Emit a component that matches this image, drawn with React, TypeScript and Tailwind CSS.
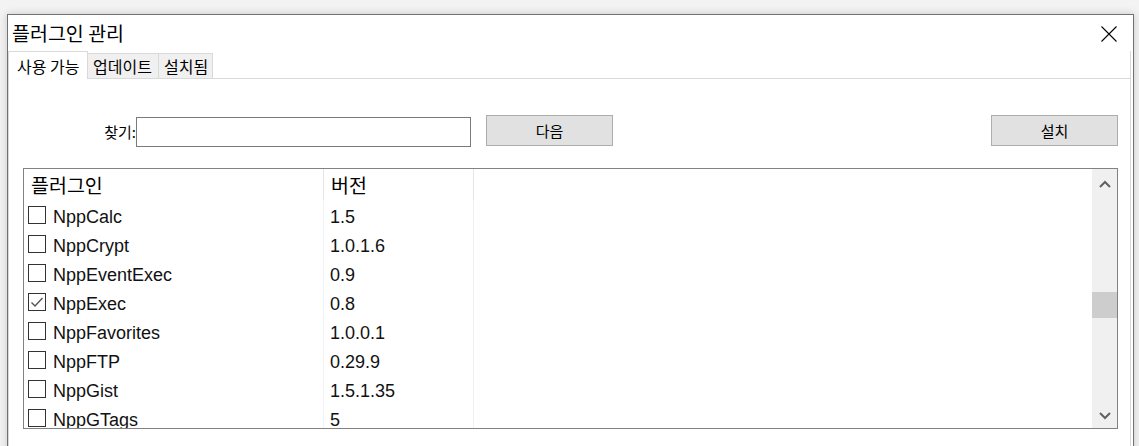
import React from "react";

const rows: { name: string; ver: string; checked?: boolean }[] = [
  { name: "NppCalc", ver: "1.5" },
  { name: "NppCrypt", ver: "1.0.1.6" },
  { name: "NppEventExec", ver: "0.9" },
  { name: "NppExec", ver: "0.8", checked: true },
  { name: "NppFavorites", ver: "1.0.0.1" },
  { name: "NppFTP", ver: "0.29.9" },
  { name: "NppGist", ver: "1.5.1.35" },
  { name: "NppGTags", ver: "5" },
];

const KR = "font-['Noto_Sans_CJK_KR','Noto_Sans',sans-serif]";
const LAT = "font-['Liberation_Sans','Noto_Sans_CJK_KR',sans-serif]";

export default function App() {
  return (
    <div className="w-[1139px] h-[446px] overflow-hidden bg-[#f3f3f3] pt-[14px] pl-[7px]">
      <div className="w-[1127px] h-[460px] border border-[#717171] bg-white shadow-[0_0_8px_rgba(0,0,0,0.18)] text-black">
        {/* Title bar */}
        <div className="h-[36px] flex items-center justify-between pl-[4px] pr-[16px]">
          <span className={`${KR} text-[19.5px] leading-none`}>플러그인 관리</span>
          <svg width="16" height="16" viewBox="0 0 16 16" className="mt-[1px]">
            <path d="M0.5 0.5 L15.5 15.5 M15.5 0.5 L0.5 15.5" stroke="#000" strokeWidth="1.1" fill="none" />
          </svg>
        </div>
        {/* Tabs */}
        <div className="h-[28px] flex items-end w-[1123px]">
          <div className={`${KR} h-[28px] w-[80px] border-l border-t border-r border-[#d9d9d9] bg-white flex items-center pl-[8px] text-[16px] leading-none`}>
            사용 가능
          </div>
          <div className={`${KR} h-[26px] w-[71px] border-t border-r border-b border-[#d9d9d9] bg-[#f0f0f0] flex items-center pl-[5px] text-[16px] leading-none`}>
            업데이트
          </div>
          <div className={`${KR} h-[26px] w-[54px] border-t border-r border-b border-[#d9d9d9] bg-[#f0f0f0] flex items-center pl-[5px] text-[16px] leading-none`}>
            설치됨
          </div>
          <div className="flex-1 h-[1px] bg-[#d9d9d9]" />
          <div className="h-[28px] w-[1px] bg-[#d9d9d9]" />
        </div>
        {/* Pane */}
        <div className="w-[1123px] h-[400px] border-l border-r border-[#d9d9d9] pt-[36px]">
          <div className="flex items-start h-[32px] pr-[12px]">
            <div className={`${KR} w-[127px] h-[32px] flex items-center justify-end text-[15px] leading-none pt-[1px]`}>
              찾기:
            </div>
            <div className="w-[335px] h-[30px] mt-[2px] border border-[#7a7a7a] bg-white" />
            <button className={`${KR} ml-[15px] w-[127px] h-[31px] border border-[#adadad] bg-[#e1e1e1] text-[15px] leading-none flex items-center justify-center`}>
              다음
            </button>
            <div className="flex-1" />
            <button className={`${KR} w-[127px] h-[31px] border border-[#adadad] bg-[#e1e1e1] text-[15px] leading-none flex items-center justify-center`}>
              설치
            </button>
          </div>
          {/* List */}
          <div className="ml-[14px] mt-[21px] w-[1095px] h-[261px] border border-[#828282] flex overflow-hidden bg-white">
            <div className="flex-1 flex flex-col overflow-hidden">
              <div className="h-[31px] shrink-0 flex">
                <div className={`${KR} w-[300px] border-r border-[#e5e5e5] flex items-center pl-[7px] text-[19.5px] leading-none`}>
                  플러그인
                </div>
                <div className={`${KR} w-[150px] border-r border-[#e5e5e5] flex items-center pl-[7px] text-[19.5px] leading-none`}>
                  버전
                </div>
                <div className="flex-1" />
              </div>
              {rows.map((r) => (
                <div key={r.name} className="h-[29px] shrink-0 flex">
                  <div className="w-[300px] border-r border-[#eef1f5] flex items-center pl-[4px]">
                    <div className="w-[18px] h-[18px] border border-[#333333] bg-white flex items-center justify-center shrink-0">
                      {r.checked && (
                        <svg width="16" height="16" viewBox="0 0 16 16">
                          <path d="M2.5 8.5 L6 12 L13.5 4" stroke="#555" strokeWidth="1.4" fill="none" />
                        </svg>
                      )}
                    </div>
                    <span className={`${LAT} ml-[7px] mt-[4px] text-[18px] leading-none text-[#111]`}>{r.name}</span>
                  </div>
                  <div className="w-[150px] border-r border-[#eef1f5] flex items-center pl-[6px]">
                    <span className={`${LAT} mt-[4px] text-[18px] leading-none text-[#111]`}>{r.ver}</span>
                  </div>
                  <div className="flex-1" />
                </div>
              ))}
            </div>
            {/* Scrollbar */}
            <div className="w-[25px] h-full bg-[#f0f0f0] flex flex-col">
              <div className="h-[25px] flex items-center justify-center pt-[4px]">
                <svg width="12" height="8" viewBox="0 0 12 8">
                  <path d="M1 7 L6 2 L11 7" stroke="#606060" strokeWidth="2" fill="none" />
                </svg>
              </div>
              <div className="flex-1 pt-[98px]">
                <div className="h-[26px] w-full bg-[#cdcdcd]" />
              </div>
              <div className="h-[25px] flex items-center justify-center">
                <svg width="12" height="8" viewBox="0 0 12 8">
                  <path d="M1 1 L6 6 L11 1" stroke="#606060" strokeWidth="2" fill="none" />
                </svg>
              </div>
            </div>
          </div>
        </div>
      </div>
    </div>
  );
}
